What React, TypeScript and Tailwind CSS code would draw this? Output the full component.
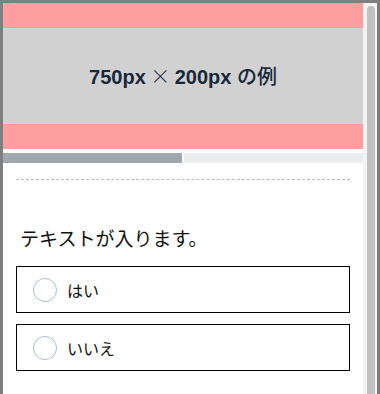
import React, { useState } from 'react';

const options = ['はい', 'いいえ'];

const App: React.FC = () => {
  const [selected, setSelected] = useState<string | null>(null);

  return (
    <div className="w-[380px] h-[394px] overflow-hidden bg-[#7f7f7f] pt-[3px] pl-[3px] flex">
      <div
        className="w-[360px] h-full bg-white flex flex-col"
        style={{ fontFamily: '"Noto Sans CJK JP", "Noto Sans", sans-serif' }}
      >
        <div className="h-[25px] bg-[#ff9e9e]" />
        <div className="h-[96px] bg-[#d1d1d1] flex items-center justify-center">
          <span className="text-[20px] font-bold text-[#17283a] font-['Liberation_Sans','Noto_Sans_CJK_JP',sans-serif]">
            750px<span className="font-['Noto_Sans_CJK_JP',sans-serif] font-light"> × </span>200px{' '}
            <span className="font-['Noto_Sans_CJK_JP',sans-serif] font-medium">の例</span>
          </span>
        </div>
        <div className="h-[25px] bg-[#ff9e9e]" />

        <div className="mt-[4px] flex h-[10px] gap-[2px]">
          <div className="w-[179px] bg-[#a1a7ae]" />
          <div className="flex-1 bg-[#ecedee]" />
        </div>

        <div className="mx-[13px] mt-[16px] border-t border-dashed border-[#bcbcbc]" />

        <p className="mt-[44px] ml-[17px] text-[19px] leading-[28px] text-[#111]">テキストが入ります。</p>

        <div className="mt-[14px] mx-[13px] flex flex-col gap-[11px]">
          {options.map((opt) => (
            <button
              key={opt}
              type="button"
              onClick={() => setSelected(opt)}
              className="h-[47px] border border-black flex items-center pl-[16px] gap-[10px] text-left"
            >
              <span className="w-[24px] h-[24px] rounded-full border-[1.5px] border-[#a9c0cd] flex items-center justify-center">
                {selected === opt && <span className="w-[12px] h-[12px] rounded-full bg-[#a9c0cd]" />}
              </span>
              <span className="text-[16px] text-[#111]">{opt}</span>
            </button>
          ))}
        </div>
      </div>

      <div className="w-[14px] h-full flex">
        <div className="w-[4px] bg-[#f3f3f3]" />
        <div className="w-[8px] bg-[#f3f3f3] pt-[3px]">
          <div className="h-full bg-[#c1c1c1] rounded-t-[4px]" />
        </div>
        <div className="w-[2px] bg-[#f3f3f3]" />
      </div>
      <div className="w-[3px] h-full bg-[#7a7a7a]" />
    </div>
  );
};

export default App;
